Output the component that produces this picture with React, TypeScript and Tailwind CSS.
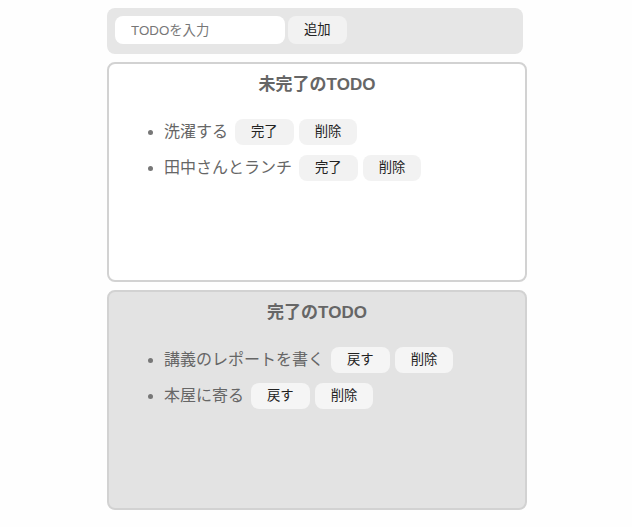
import React from "react";

const font = { fontFamily: '"Liberation Sans", "Noto Sans CJK JP", sans-serif' };

type Item = { text: string };

const TodoButton = ({ label, light }: { label: string; light?: boolean }) => (
    <button
        className={
            light
                ? "h-[26px] rounded-lg bg-[#f5f5f5] px-4 text-[13.33px] text-[#222]"
                : "h-[26px] rounded-lg bg-[#f2f2f2] px-4 text-[13.33px] text-[#222]"
        }
    >
        {label}
    </button>
);

const TodoArea = ({
    title,
    items,
    action,
    done,
}: {
    title: string;
    items: Item[];
    action: string;
    done?: boolean;
}) => (
    <div
        className={
            done
                ? "mt-2 h-[220px] w-[420px] rounded-lg border-2 border-[#d2d2d2] bg-[#e3e3e3] p-2"
                : "mt-2 h-[220px] w-[420px] rounded-lg border-2 border-[#d2d2d2] bg-white p-2"
        }
    >
        <p className="pt-px text-center text-[17px] font-bold leading-6 text-[#666]">{title}</p>
        <ul className="mt-[18px] list-disc pl-[47px] text-[#666] marker:text-[#777]">
            {items.map((item) => (
                <li key={item.text}>
                    <div className="flex h-9 items-center gap-[5px] pb-1 pt-px">
                        <p className="mr-[2px] text-base">{item.text}</p>
                        <TodoButton label={action} light={done} />
                        <TodoButton label="削除" light={done} />
                    </div>
                </li>
            ))}
        </ul>
    </div>
);

export default function App() {
    return (
        <main className="min-h-[527px] bg-[#fefefe] pt-2" style={font}>
            <div className="ml-[107px] flex flex-col">
                {/* input area */}
                <div className="flex h-[46px] w-[416px] items-start gap-[3px] rounded-lg bg-[#e6e6e6] p-2">
                    <input
                        className="h-7 w-[170px] rounded-lg bg-white px-4 text-[13.33px] outline-none placeholder:text-[#777]"
                        placeholder="TODOを入力"
                    />
                    <button className="h-7 rounded-lg bg-[#f2f2f2] px-4 text-[13.33px] text-[#222]">
                        追加
                    </button>
                </div>

                <TodoArea
                    title="未完了のTODO"
                    action="完了"
                    items={[{ text: "洗濯する" }, { text: "田中さんとランチ" }]}
                />
                <TodoArea
                    title="完了のTODO"
                    action="戻す"
                    done
                    items={[{ text: "講義のレポートを書く" }, { text: "本屋に寄る" }]}
                />
            </div>
        </main>
    );
}
